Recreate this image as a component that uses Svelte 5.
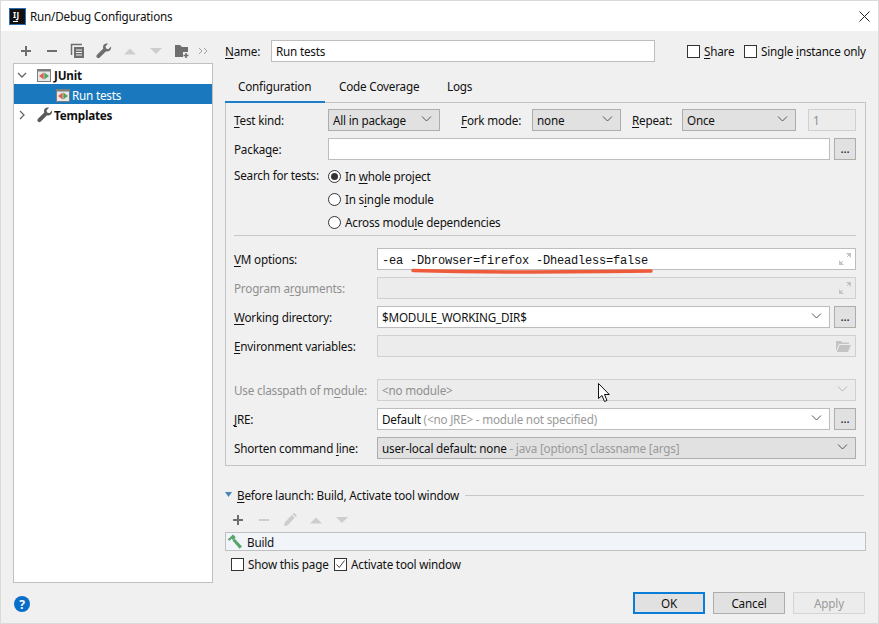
<script>
  const toolbarIconColor = '#6e6e6e';
</script>

{#snippet chev(dis = false)}
  <svg class="chev" width="11" height="6" viewBox="0 0 11 6"><path d="M1 .5 5.500 5 10 .5" fill="none" stroke={dis ? '#b5b5b5' : '#555'} stroke-width="1"/></svg>
{/snippet}
{#snippet frameIcon()}
  <svg width="15" height="13" viewBox="0 0 15 13">
    <rect x=".5" y=".5" width="13" height="12" fill="#e8e8e8" stroke="#7d7d7d"/><rect x="0" y="0" width="14" height="2.500" fill="#7d7d7d"/>
    <path d="M6.700 3.500v7L2 7z" fill="#d9634f"/><path d="M7.300 3.500v7L12 7z" fill="#4fa35f"/>
  </svg>
{/snippet}
{#snippet wrench(c = '#6e6e6e')}
  <svg width="16" height="16" viewBox="0 0 16 16"><path d="M15 3.600l-2.600 2.600-2.300-.6-.6-2.300L12 .8C9.900 0 7.600 1.100 7.100 3.200c-.2.800-.1 1.600.2 2.300L1 11.800c-.8.800-.8 2.100 0 2.800.8.800 2 .8 2.800 0l6.300-6.300c2.600 1 5.600-1.300 4.900-4.700z" fill={c}/></svg>
{/snippet}
{#snippet up(c)}
  <svg width="16" height="16" viewBox="0 0 16 16"><path d="M2 11.500 8 5.500l6 6z" fill={c}/></svg>
{/snippet}
{#snippet down(c)}
  <svg width="16" height="16" viewBox="0 0 16 16"><path d="M2 5h12l-6 6z" fill={c}/></svg>
{/snippet}
{#snippet plus(c)}
  <svg width="16" height="16" viewBox="0 0 16 16"><path d="M3 8h10M8 3v10" stroke={c} stroke-width="2"/></svg>
{/snippet}
{#snippet minus(c)}
  <svg width="16" height="16" viewBox="0 0 16 16"><path d="M3 8h10" stroke={c} stroke-width="2"/></svg>
{/snippet}
{#snippet dots()}
  <div class="dots">...</div>
{/snippet}

<div class="win">
  <header class="title">
    <div class="logo"><span>IJ</span><i></i></div>
    <span class="ttl">Run/Debug Configurations</span>
    <svg class="close" width="11" height="11" viewBox="0 0 11 11"><path d="M.5.500l10 10M10.500.5l-10 10" stroke="#222" stroke-width="1"/></svg>
  </header>

  <div class="main">
    <aside class="left">
      <div class="tools">
        {@render plus(toolbarIconColor)}
        {@render minus(toolbarIconColor)}
        <svg width="16" height="16" viewBox="0 0 16 16"><path d="M1.500 12V1.500H12" fill="none" stroke="#6e6e6e" stroke-width="1.500"/><path d="M4 4h10v11H4z" fill="#6e6e6e"/><path d="M6 7h6M6 9.500h6M6 12h6" stroke="#f0f0f0"/></svg>
        {@render wrench('#6e6e6e')}
        {@render up('#cdcdcd')}
        {@render down('#cdcdcd')}
        <svg width="16" height="16" viewBox="0 0 16 16"><path d="M1 2h5l2 2h6v5H9v5H1z" fill="#6e6e6e"/><path d="M12 10v5M9.500 12.500h5" stroke="#6e6e6e" stroke-width="1.600"/></svg>
        <svg class="more" width="10" height="8" viewBox="0 0 10 8"><path d="M1 1l3 3-3 3M6 1l3 3-3 3" fill="none" stroke="#a0a0a0"/></svg>
      </div>
      <div class="tree">
        <div class="node">
          <svg class="tw" width="10" height="10" viewBox="0 0 10 10"><path d="M1 3l4 4 4-4" fill="none" stroke="#666" stroke-width="1.300"/></svg>
          <span class="ic">{@render frameIcon()}</span><b>JUnit</b>
        </div>
        <div class="node sel">
          <span class="ic child">{@render frameIcon()}</span><span>Run tests</span>
        </div>
        <div class="node">
          <svg class="tw" width="10" height="10" viewBox="0 0 10 10"><path d="M3 1l4 4-4 4" fill="none" stroke="#666" stroke-width="1.300"/></svg>
          <span class="ic">{@render wrench('#5a5a5a')}</span><b>Templates</b>
        </div>
      </div>
      <svg class="help" width="16" height="16" viewBox="0 0 16 16"><circle cx="8" cy="8" r="8" fill="#0a6fc9"/><text x="8" y="12.500" text-anchor="middle" font-size="12" font-weight="700" font-family="Noto Sans, sans-serif" fill="#fff">?</text></svg>
    </aside>

    <section class="right">
      <div class="namerow">
        <span class="lab namelab"><u>N</u>ame:</span>
        <div class="inp name">Run tests</div>
        <div class="cb first"></div><span class="cbl share"><u>S</u>hare</span>
        <div class="cb second"></div><span class="cbl">Single <u>i</u>nstance only</span>
      </div>

      <nav class="tabs">
        <div class="tab active">Configuration</div>
        <div class="tab cov">Code Coverage</div>
        <div class="tab logs">Logs</div>
      </nav>

      <div class="panel">
        <div class="row">
          <span class="lab l1"><u>T</u>est kind:</span>
          <div class="sel-box tk"><span>All in package</span>{@render chev()}</div>
          <span class="lab fork"><u>F</u>ork mode:</span>
          <div class="sel-box fm"><span>none</span>{@render chev()}</div>
          <span class="lab rep"><u>R</u>epeat:</span>
          <div class="sel-box rp"><span>Once</span>{@render chev()}</div>
          <div class="inp dis repn">1</div>
        </div>
        <div class="row">
          <span class="lab l1">Packa<u>g</u>e:</span>
          <div class="inp grow"></div>
          {@render dots()}
        </div>
        <div class="radios">
          <span class="l1 rl">Search for tests:</span>
          <div class="rcol">
            <div class="radio"><span class="rb on"></span><span>In <u>w</u>hole project</span></div>
            <div class="radio"><span class="rb"></span><span>In s<u>i</u>ngle module</span></div>
            <div class="radio"><span class="rb"></span><span>Across modu<u>l</u>e dependencies</span></div>
          </div>
        </div>
        <div class="sep"></div>

        <div class="row vm">
          <span class="lab l2"><u>V</u>M options:</span>
          <div class="inp grow mono">
            <span>-ea -Dbrowser=firefox -Dheadless=false</span>
            <svg class="expand" width="14" height="14" viewBox="0 0 14 14"><path d="M8 1h5v5zM6 13H1V8z" fill="#c4c4c4"/><path d="M12 2 9 5M2 12l3-3" stroke="#c4c4c4"/></svg>
            <svg class="scribble" width="242" height="6" viewBox="0 0 242 6"><path d="M2 2.500c50 1.500 100 1.500 118 1.500s80-.5 120-1" fill="none" stroke="#ee5b3b" stroke-width="3.500" stroke-linecap="round"/></svg>
          </div>
        </div>
        <div class="row">
          <span class="lab l2 off">Program a<u>r</u>guments:</span>
          <div class="inp grow dis">
            <svg class="expand" width="14" height="14" viewBox="0 0 14 14"><path d="M8 1h5v5zM6 13H1V8z" fill="#c4c4c4"/><path d="M12 2 9 5M2 12l3-3" stroke="#c4c4c4"/></svg>
          </div>
        </div>
        <div class="row">
          <span class="lab l2"><u>W</u>orking directory:</span>
          <div class="inp grow combo"><span>$MODULE_WORKING_DIR$</span>{@render chev()}</div>
          {@render dots()}
        </div>
        <div class="row">
          <span class="lab l2"><u>E</u>nvironment variables:</span>
          <div class="inp grow dis">
            <svg class="expand folder" width="15" height="12" viewBox="0 0 15 12"><path d="M0 1h5l1.500 1.500H13V4H3L0 11z" fill="#c4c4c4"/><path d="M3.500 5H15l-3 7H.8z" fill="#c4c4c4"/></svg>
          </div>
        </div>
        <div class="row gapped">
          <span class="lab l2 off">Use classpath of m<u>o</u>dule:</span>
          <div class="inp grow dis combo off"><span>&lt;no module&gt;</span>{@render chev(true)}</div>
        </div>
        <div class="row">
          <span class="lab l2"><u>J</u>RE:</span>
          <div class="inp grow combo"><span>Default <em>(&lt;no JRE&gt; - module not specified)</em></span>{@render chev()}</div>
          {@render dots()}
        </div>
        <div class="row">
          <span class="lab l2">Shorten command <u>l</u>ine:</span>
          <div class="sel-box grow"><span>user-local default: none <em>- java [options] classname [args]</em></span>{@render chev()}</div>
        </div>
      </div>

      <div class="before">
        <svg width="7" height="6" viewBox="0 0 7 6"><path d="M0 0h7L3.500 5z" fill="#4a87b8"/></svg>
        <span class="bl"><u>B</u>efore launch: Build, Activate tool window</span>
        <div class="line"></div>
      </div>
      <div class="tools2">
        {@render plus('#6e6e6e')}
        {@render minus('#cdcdcd')}
        <svg width="16" height="16" viewBox="0 0 16 16"><path d="M2 14l.7-3.500 7-7.500 3 2.800-7 7.500zM10.500 2.200 12 .8l3 2.800-1.500 1.500z" fill="#cdcdcd"/></svg>
        {@render up('#cdcdcd')}
        {@render down('#cdcdcd')}
      </div>
      <div class="list">
        <svg width="16" height="16" viewBox="0 0 16 16"><path d="M5.500 6.500 7.500 4.500 15 12.500l-2.400 2.300z" fill="#5aa469"/><path d="M.6 5.500 6 .5l2.800 2.700L6 5.900 4.500 4.800 2.600 6.700z" fill="#5aa469"/></svg>
        <span>Build</span>
      </div>
      <div class="checks">
        <div class="cb"></div><span class="cbl show">Show this page</span>
        <div class="cb act"><svg width="11" height="11" viewBox="0 0 11 11"><path d="M1.500 5.500 4.300 8.500 9.500 1.500" fill="none" stroke="#444" stroke-width="1"/></svg></div><span class="cbl">Activate tool window</span>
      </div>
      <div class="buttons">
        <div class="btn ok">OK</div>
        <div class="btn">Cancel</div>
        <div class="btn off">Apply</div>
      </div>
    </section>
  </div>

  <svg class="cursor" width="13" height="20" viewBox="0 0 13 20"><path d="M.5.500v15l3.500-3 2.500 6 2.500-1-2.500-6h4.800z" fill="#fff" stroke="#111" stroke-width="1"/></svg>
</div>

<style>
  :global(body) { margin: 0; background: #f0f0f0; }
  .win { position: relative; width: 879px; height: 624px; box-sizing: border-box; border: 1px solid #dadada; background: #f0f0f0; font: 11.7px/16px "Noto Sans", sans-serif; letter-spacing: -0.2px; color: #111; display: flex; flex-direction: column; overflow: hidden; }
  u { text-underline-offset: 2px; text-decoration-thickness: 1px; }
  em { font-style: normal; color: #9a9a9a; }
  .title { height: 30px; background: #fff; display: flex; align-items: center; padding-left: 8px; flex: none; }
  .logo { width: 15px; height: 15px; margin-right: 4px; background: #111; border: 1px solid #2a6fb5; position: relative; color: #fff; font-size: 8px; line-height: 9px; font-weight: 700; letter-spacing: 0.3px; box-sizing: content-box; }
  .logo span { position: absolute; left: 3px; top: 1px; }
  .logo i { position: absolute; left: 3px; bottom: 2px; width: 5px; height: 1px; background: #fff; }
  .close { margin-left: auto; margin-right: 8px; }
  .main { flex: 1; display: flex; min-height: 0; }
  .left { width: 212px; padding-left: 12px; box-sizing: border-box; flex: none; display: flex; flex-direction: column; }
  .tools { height: 32px; display: flex; align-items: center; gap: 10px; padding: 8px 0 0 5px; box-sizing: border-box; }
  .more { margin-left: -2px; }
  .tree { width: 200px; height: 520px; box-sizing: border-box; border: 1px solid #c0c0c0; background: #fff; flex: none; }
  .node { height: 20px; box-sizing: border-box; padding-top: 2px; display: flex; align-items: center; padding-left: 3px; }
  .node b { font-weight: 700; }
  .tw { margin-right: 7px; flex: none; }
  .ic { width: 16px; display: flex; margin-left: 3px; margin-right: 1px; }
  .ic.child { margin-left: 39px; margin-right: 0; width: 16px; }
  .sel { background: #1a79be; color: #fff; }
  .help { margin: 13px 0 0 1px; }

  .right { flex: 1; padding: 9px 12px 9px 12px; display: flex; flex-direction: column; min-width: 0; }
  .namerow { display: flex; align-items: center; height: 22px; flex: none; }
  .namelab { width: 46px; }
  .inp { height: 22px; box-sizing: border-box; border: 1px solid #bdbdbd; background: #fff; padding: 0 4px; display: flex; align-items: center; position: relative; flex: none; white-space: nowrap; }
  .name { width: 384px; }
  .cb { width: 13px; height: 13px; box-sizing: border-box; border: 1px solid #333; background: #fff; flex: none; display: flex; align-items: center; justify-content: center; }
  .cb.first { margin-left: 32px; }
  .cb.second { margin-left: 11px; }
  .cbl { margin-left: 4px; white-space: nowrap; flex: none; }
  .share { width: 29px; }
  .show { width: 80px; }
  .tabs { display: flex; height: 32px; margin-top: 8px; flex: none; position: relative; z-index: 1; }
  .tab { box-sizing: border-box; height: 33px; padding-top: 8px; white-space: nowrap; }
  .tab.active { width: 100px; padding-left: 13px; border-bottom: 2px solid #1d7fc9; }
  .tab.cov { width: 114px; padding-left: 14px; }
  .tab.logs { padding-left: 8px; }
  .panel { width: 641px; height: 364px; box-sizing: border-box; border: 1px solid #c4c4c4; padding: 6px 9px 0 8px; flex: none; }
  .row { display: flex; align-items: center; height: 22px; margin-bottom: 7px; }
  .lab { white-space: nowrap; flex: none; }
  .l1 { width: 94px; flex: none; }
  .l2 { width: 143px; }
  .off { color: #8f8f8f; }
  .grow { flex: 1; min-width: 0; }
  .sel-box { height: 22px; box-sizing: border-box; border: 1px solid #adadad; background: #e1e1e1; display: flex; align-items: center; justify-content: space-between; padding: 0 7px 0 4px; white-space: nowrap; flex: none; }
  .sel-box.grow { flex: 1; }
  .tk { width: 112px; }
  .fm { width: 89px; }
  .rp { width: 114px; }
  .fork { margin-left: 21px; width: 71px; }
  .rep { margin-left: 11px; width: 50px; }
  .repn { width: 48px; margin-left: 12px; background: #ececec; border-color: #d4d4d4; color: #8f8f8f; }
  .dis { background: #ececec; border-color: #d0d0d0; }
  .combo { justify-content: space-between; padding-right: 7px; }
  .chev { flex: none; margin-top: -2px; }
  .dots { width: 22px; height: 22px; margin-left: 4px; box-sizing: border-box; border: 1px solid #adadad; background: #e1e1e1; text-align: center; line-height: 18px; flex: none; }
  .radios { display: flex; height: 68px; box-sizing: border-box; }
  .rl { white-space: nowrap; }
  .rcol { display: flex; flex-direction: column; gap: 7px; padding-top: 1px; }
  .radio { display: flex; align-items: center; height: 16px; gap: 4px; white-space: nowrap; }
  .radio span:last-child { margin-top: -1px; }
  .rb { width: 13px; height: 13px; box-sizing: border-box; border: 1px solid #333; border-radius: 50%; background: #fff; display: flex; align-items: center; justify-content: center; flex: none; }
  .rb.on::after { content: ""; width: 7px; height: 7px; border-radius: 50%; background: #333; }
  .sep { height: 1px; background: #c8c8c8; margin: 0 0 12px 0; }
  .mono { font-family: "Liberation Mono", monospace; font-size: 12px; letter-spacing: -0.2px; padding-top: 3px; }
  .expand { position: absolute; right: 3px; top: 3px; }
  .expand.folder { top: 4px; right: 4px; }
  .scribble { position: absolute; left: 33px; top: 19px; }
  .gapped { margin-top: 22px; }
  .before { display: flex; align-items: center; height: 16px; margin-top: 21px; flex: none; }
  .bl { margin-left: 5px; white-space: nowrap; }
  .line { flex: 1; height: 1px; background: #c8c8c8; margin: 0 2px 0 6px; }
  .tools2 { display: flex; gap: 10px; align-items: center; height: 16px; margin: 9px 0 0 5px; flex: none; }
  .list { height: 19px; width: 641px; box-sizing: border-box; border: 1px solid #c0c0c0; background: #f1f5fa; display: flex; align-items: center; gap: 4px; padding: 0 0 0 1px; margin-top: 4px; flex: none; }
  .checks { display: flex; align-items: center; height: 16px; margin: 5px 0 0 6px; flex: none; }
  .act { margin-left: 6px; }
  .buttons { margin-top: auto; margin-right: 1px; display: flex; justify-content: flex-end; gap: 8px; flex: none; }
  .btn { width: 72px; height: 22px; box-sizing: border-box; border: 1px solid #adadad; background: #e1e1e1; text-align: center; line-height: 20px; }
  .btn.ok { border: 2px solid #0a7dd6; line-height: 18px; }
  .btn.off { background: #ececec; border-color: #d4d4d4; color: #9a9a9a; }
  .cursor { position: absolute; left: 597px; top: 382px; }
</style>
